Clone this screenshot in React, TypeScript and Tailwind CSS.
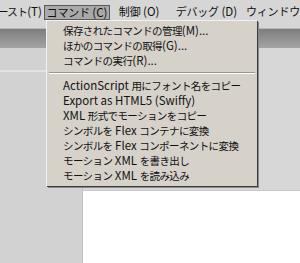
import React from "react";

const topItems = [
  "保存されたコマンドの管理(M)...",
  "ほかのコマンドの取得(G)...",
  "コマンドの実行(R)...",
];

const bottomItems = [
  "ActionScript 用にフォント名をコピー",
  "Export as HTML5 (Swiffy)",
  "XML 形式でモーションをコピー",
  "シンボルを Flex コンテナに変換",
  "シンボルを Flex コンポーネントに変換",
  "モーション XML を書き出し",
  "モーション XML を読み込み",
];

const font = { fontFamily: '"Noto Sans CJK JP", "Liberation Sans", sans-serif' };

// japanese glyphs in the shot are narrower than Noto's, so shrink only those runs
function Jp({ text, tight = true }: { text: string; tight?: boolean }) {
  const parts = text.split(/([\u3000-\u30ff\u4e00-\u9fff]+)/);
  return (
    <span>
      {parts.map((p, i) =>
        i % 2 === 1 ? (
          <span
            key={i}
            className={tight ? "text-[10.5px] tracking-[-0.6px]" : "text-[11px] tracking-[-0.2px]"}
          >
            {p}
          </span>
        ) : (
          <span key={i}>{p}</span>
        )
      )}
    </span>
  );
}

function MenuRow({ label }: { label: string }) {
  return (
    <div className="h-[15px] flex items-center pl-[16px] leading-none whitespace-pre">
      <Jp text={label} />
    </div>
  );
}

export default function App() {
  return (
    <div
      className="relative w-[300px] h-[263px] overflow-hidden bg-white text-[#111] text-[11.5px]"
      style={font}
    >
      {/* menu bar */}
      <div className="h-[28px] bg-[#d6d6d6] flex items-start pt-[5px] whitespace-pre leading-none">
        <div className="h-[14px] flex items-center -ml-[2px] w-[48px]">
          <Jp text="ースト(T)" />
        </div>
        <div className="h-[15px] w-[68px] flex items-center justify-center bg-[#a9a9a9] border border-[#5a5a5a]">
          <Jp text="コマンド (C)" tight={false} />
        </div>
        <div className="h-[14px] flex items-center ml-[9px] w-[59px]">
          <Jp text="制御 (O)" tight={false} />
        </div>
        <div className="h-[14px] flex items-center w-[73px]">
          <Jp text="デバッグ (D)" tight={false} />
        </div>
        <div className="h-[14px] flex items-center">
          <Jp text="ウィンドウ" tight={false} />
        </div>
      </div>

      {/* dark tab strip */}
      <div className="h-[20px] bg-gradient-to-b from-[#7e7e7e] to-[#a4a4a4] border-t border-[#b8b8b8]" />

      {/* workspace */}
      <div className="flex h-[215px]">
        <div className="w-[83px] bg-[#d2d2d2] border-r border-[#c2c2c2]">
          <div className="h-[24px] border-b-2 border-[#e2e2e2]" />
        </div>
        <div className="flex-1 flex flex-col">
          <div className="h-[143px] bg-[#d7d7d7] border-b border-[#c8c8c8]" />
          <div className="flex-1 bg-white" />
        </div>
      </div>

      {/* dropdown */}
      <div className="absolute left-[46px] top-[20px] w-[211px] bg-[#d6d2ca] border-l border-t border-[#f4f2ee] shadow-[1px_1px_0_#3c3c3c,2px_2px_0_#8a8a8a] pt-[2px] pb-[3px]">
        {topItems.map((t) => (
          <MenuRow key={t} label={t} />
        ))}
        <div className="h-[10px] flex items-center px-[2px]">
          <div className="w-full border-t border-[#9a9790] border-b border-b-white" />
        </div>
        {bottomItems.map((t) => (
          <MenuRow key={t} label={t} />
        ))}
      </div>
    </div>
  );
}
